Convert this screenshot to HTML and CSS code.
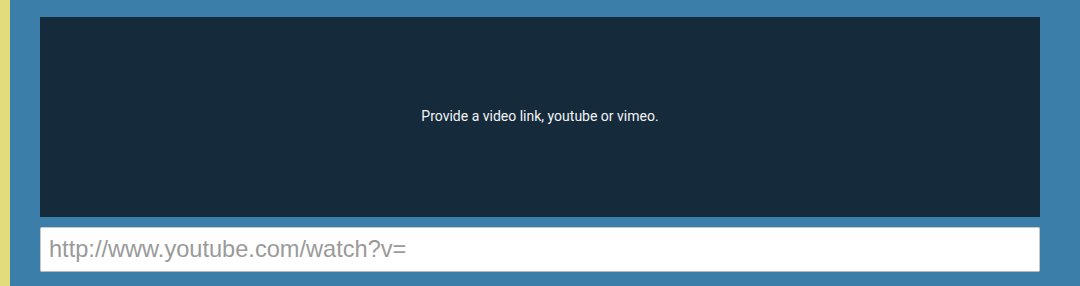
FILE: index.html
```html
<!DOCTYPE html>
<html>
<head>
<meta charset="utf-8">
<link rel="stylesheet" href="styles.css">
</head>
<body>
<div class="page">
  <div class="stripe"></div>
  <main class="main">
    <div class="preview">
      <p class="preview-text">Provide a video link, youtube or vimeo.</p>
    </div>
    <input class="url-input" type="text" placeholder="http://www.youtube.com/watch?v=">
  </main>
</div>
</body>
</html>
```
FILE: styles.css
```css
html, body {
  margin: 0;
  padding: 0;
  height: 100%;
  overflow: hidden;
}
.page {
  display: flex;
  height: 286px;
  background: #3b7ea9;
}
.stripe {
  width: 10px;
  flex: none;
  background: #e2dc7b;
}
.main {
  flex: 1;
  padding: 17px 40px 0 30px;
  display: flex;
  flex-direction: column;
  gap: 10px;
}
.preview {
  height: 200px;
  background: #152a3a;
  display: flex;
  align-items: center;
  justify-content: center;
}
.preview-text {
  margin: 0 0 2px;
  font-family: Roboto, "Liberation Sans", sans-serif;
  font-size: 14px;
  font-weight: 400;
  color: #f2f4f6;
}
.url-input {
  box-sizing: border-box;
  height: 45px;
  width: 100%;
  margin: 0;
  padding: 0 8px;
  border: 1px solid #c8c8c8;
  border-bottom-color: #b8b8b8;
  border-radius: 2px;
  background: #fff;
  font-family: "Liberation Sans", Arial, sans-serif;
  font-size: 23.6px;
  color: #333;
  outline: none;
}
.url-input::placeholder {
  color: #9a9a9a;
  opacity: 1;
}
```
